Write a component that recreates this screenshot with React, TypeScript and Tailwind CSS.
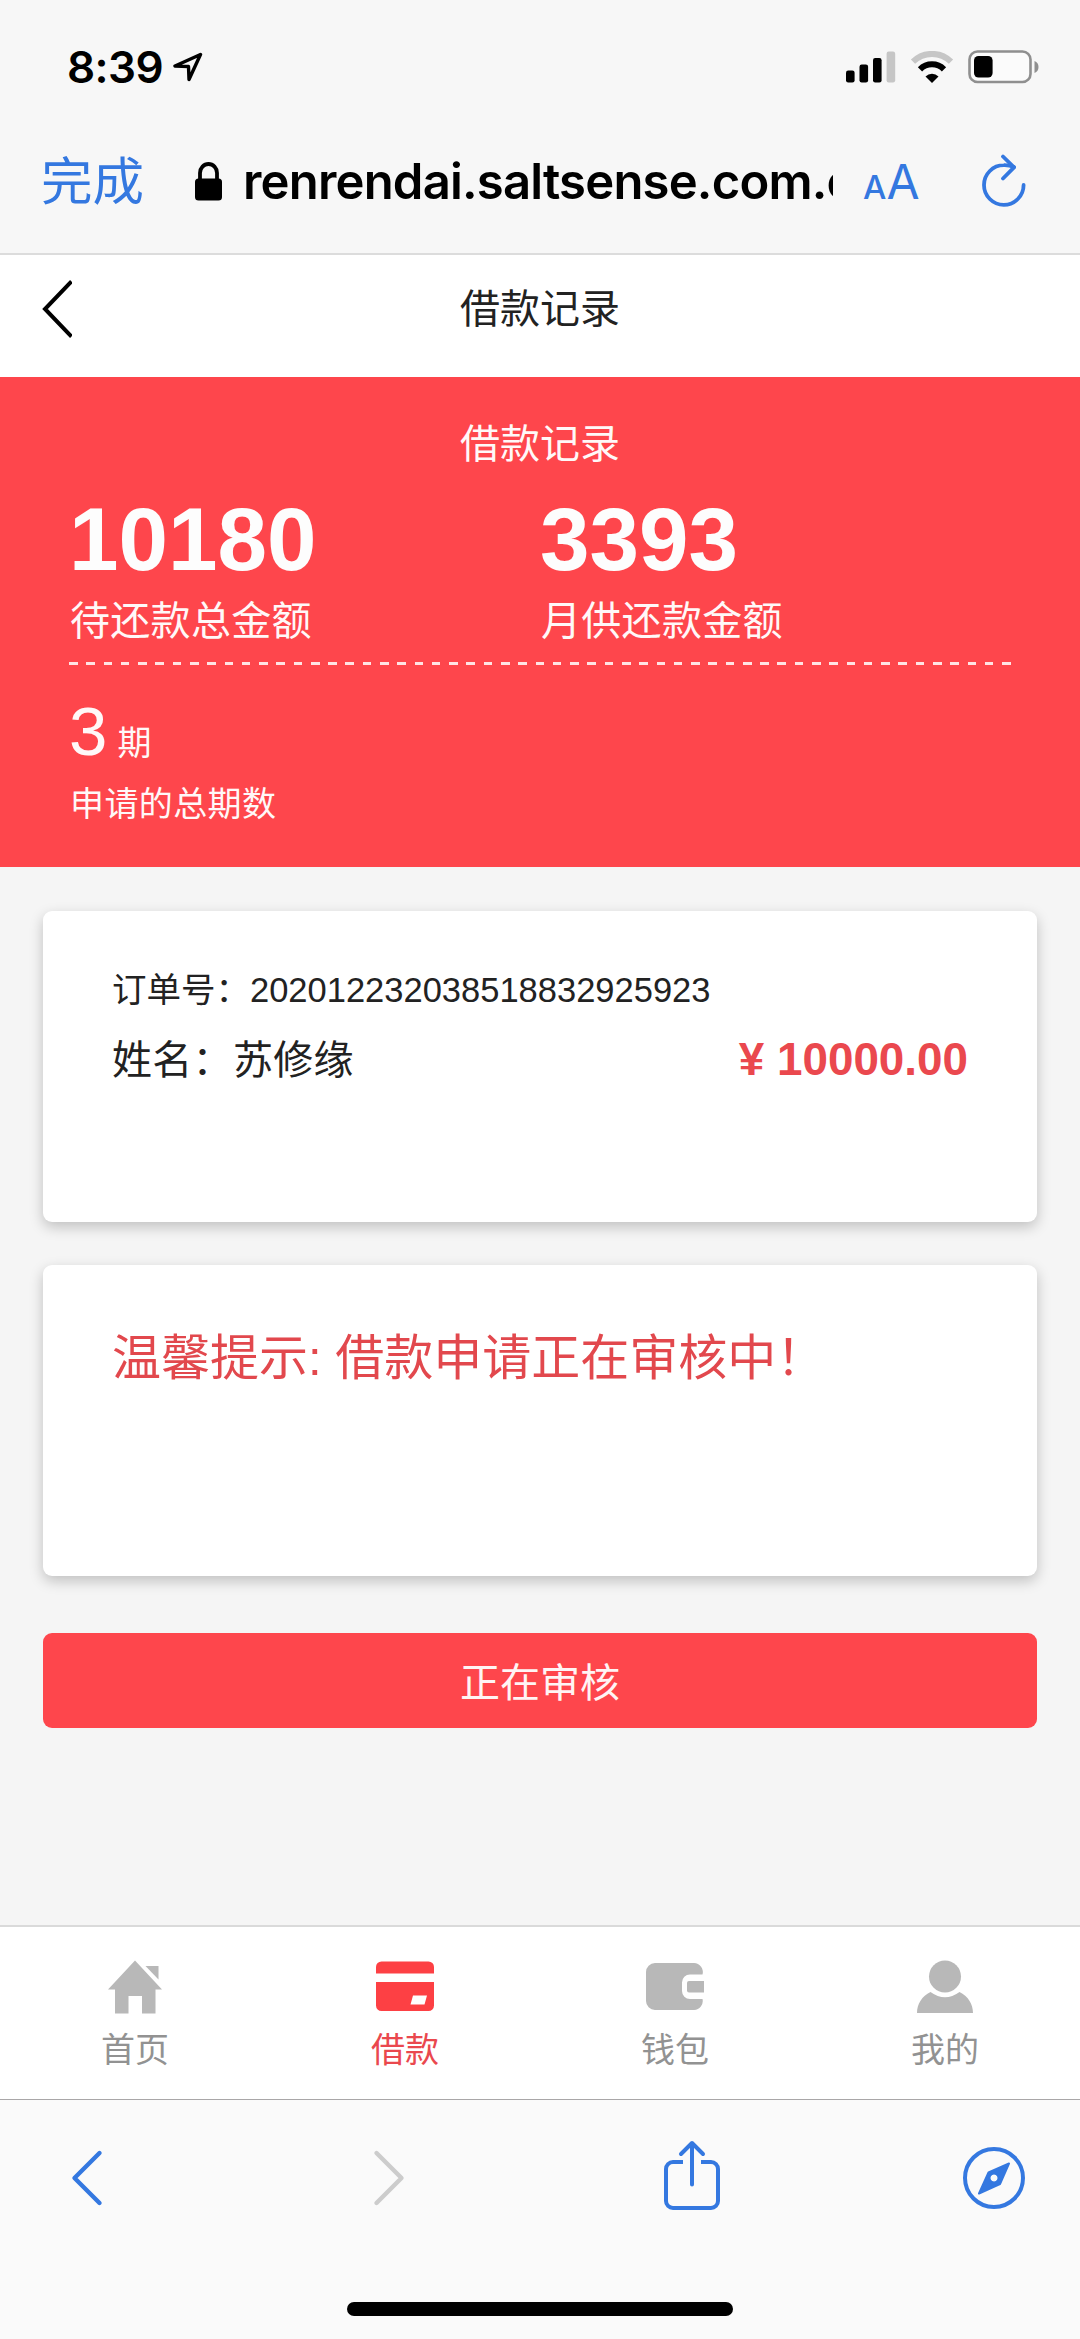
import React from 'react';

const stats = [
  { value: '10180', label: '待还款总金额' },
  { value: '3393', label: '月供还款金额' },
];

const tabs = [
  { name: '首页', icon: HomeIcon, active: false },
  { name: '借款', icon: CardIcon, active: true },
  { name: '钱包', icon: WalletIcon, active: false },
  { name: '我的', icon: UserIcon, active: false },
];

function HomeIcon() {
  return (
    <svg width="56" height="54" viewBox="0 0 56 54" fill="#b8b8b8">
      <path d="M28 0.5 L55 29.5 H48.5 V53.5 H35 V36 H21.5 V53.5 H8 V29.5 H1 Z" />
      <path d="M38.5 6 H51.5 V19.5 Z" />
    </svg>
  );
}

function CardIcon() {
  return (
    <svg width="58" height="54" viewBox="0 0 58 54" fill="#fd4044">
      <path d="M0 13.5 V7 a5.5 5.5 0 0 1 5.5 -5.5 h47 a5.5 5.5 0 0 1 5.5 5.5 V13.5 Z" />
      <path
        fillRule="evenodd"
        d="M0 22 H58 V45.5 a5.5 5.5 0 0 1 -5.5 5.5 h-47 A5.5 5.5 0 0 1 0 45.5 Z M37 35.5 L34.5 44.5 H48.5 L51 35.5 Z"
      />
    </svg>
  );
}

function WalletIcon() {
  return (
    <svg width="58" height="54" viewBox="0 0 58 54" fill="#b8b8b8">
      <path d="M9 3 H48 a9 9 0 0 1 8.5 11.5 H44 a8 8 0 0 0 -8 8 V31 a8 8 0 0 0 8 8 H56.5 a9 9 0 0 1 -8.5 11 H9 a9 9 0 0 1 -9 -9 V12 a9 9 0 0 1 9 -9 Z" />
      <path d="M43 21 H58 V32.5 H43 a2 2 0 0 1 -2 -2 V23 a2 2 0 0 1 2 -2 Z" />
    </svg>
  );
}

function UserIcon() {
  return (
    <svg width="58" height="54" viewBox="0 0 58 54" fill="#b8b8b8">
      <circle cx="29" cy="16.5" r="16" />
      <path d="M14.5 32 Q29 42.5 43.5 32 C52 36 57 44 57 53 H1 C1 44 6 36 14.5 32 Z" />
    </svg>
  );
}

function StatusBar() {
  return (
    <div className="flex h-[109px] items-center justify-between pt-6 pr-[41px] pl-[67px]">
      <div className="flex items-center gap-[10px]">
        <span className="text-[44px] leading-none font-semibold tracking-[-0.6px]">8:39</span>
        <svg width="30" height="30" viewBox="0 0 30 30" fill="none" stroke="#000" strokeWidth="3.4" strokeLinejoin="round">
          <path d="M27.5 2.5 L2 14 L15.5 14.5 L16 27.5 Z" />
        </svg>
      </div>
      <div className="flex items-center">
        <svg width="50" height="32" viewBox="0 0 50 32">
          <rect x="0" y="19.5" width="8.6" height="12" rx="2.2" />
          <rect x="13.5" y="13.5" width="8.6" height="18" rx="2.2" />
          <rect x="27" y="7" width="8.6" height="24.5" rx="2.2" />
          <rect x="40.6" y="0.5" width="8.6" height="31" rx="2.2" fill="#c6c6c6" />
        </svg>
        <svg className="ml-[14px]" width="44" height="32" viewBox="0 0 44 32" fill="none">
          <path d="M3 10.7 A27 27 0 0 1 41 10.7" stroke="#c6c6c6" strokeWidth="6" />
          <path d="M10 18.3 A17 17 0 0 1 34 18.3" stroke="#000" strokeWidth="6" />
          <path d="M22 32 L15.5 25.4 A9.3 9.3 0 0 1 28.5 25.4 Z" fill="#000" />
        </svg>
        <svg className="ml-[14px]" width="71" height="34" viewBox="0 0 71 34">
          <rect x="1.5" y="1.5" width="61" height="30.5" rx="8" fill="#fbfbfb" stroke="#8f8f8f" strokeWidth="2.6" />
          <rect x="6" y="6" width="18.6" height="21.5" rx="4.5" />
          <path d="M66.5 11 A6.5 6.5 0 0 1 66.5 23 Z" fill="#8f8f8f" />
        </svg>
      </div>
    </div>
  );
}

function AddressBar() {
  return (
    <div className="flex h-36 items-center pl-[41px]">
      <span className="w-[154px] pt-[2px] text-[51.5px] leading-none text-[#3478e0]">完成</span>
      <svg width="27" height="39" viewBox="0 0 27 39">
        <rect x="0" y="16.5" width="27" height="22" rx="3.5" />
        <path d="M5 18 V11 a8.5 9 0 0 1 17 0 V18" fill="none" stroke="#000" strokeWidth="3.8" />
      </svg>
      <div className="ml-[21px] w-[590px] overflow-hidden pt-[2px] text-[49px] leading-[72px] font-semibold tracking-[-0.8px] whitespace-nowrap">
        renrendai.saltsense.com.c
      </div>
      <div className="ml-[30px] flex items-baseline pt-[2px] text-[#3478e0]">
        <span className="text-[33px] leading-none font-medium">A</span>
        <span className="text-[48px] leading-none tracking-[-1px]">A</span>
      </div>
      <svg className="ml-[62px]" width="46" height="54" viewBox="0 0 46 54" fill="none" stroke="#3478e0" strokeWidth="3.8" strokeLinecap="round" strokeLinejoin="round">
        <path d="M42.6 31 A19.8 19.8 0 1 1 22.8 11.2 Q28 11 33 13" />
        <path d="M22 2.5 L33 13.3 L22 24.5" />
      </svg>
    </div>
  );
}

function PageHeader() {
  return (
    <div className="grid h-[122px] grid-cols-[1fr_auto_1fr] items-center bg-white pb-[15px] text-[#222]">
      <svg className="ml-[42px]" width="30" height="58" viewBox="0 0 30 58" fill="none" stroke="#000" strokeWidth="4">
        <path d="M29.5 1.5 L3 29 L29.5 56.5" />
      </svg>
      <h1 className="text-[40px] leading-none">借款记录</h1>
    </div>
  );
}

function Summary() {
  return (
    <section className="h-[490px] bg-[#fe464c] pt-[43px] text-[#fff8f8]">
      <h2 className="text-center text-[40px] leading-[48px]">借款记录</h2>
      <div className="mx-[69px] mt-[18px] grid grid-cols-2">
        {stats.map((s) => (
          <div key={s.label}>
            <div className="text-[89px] leading-[106px] font-bold text-[#fdfdfd]">{s.value}</div>
            <div className="mt-[5px] pl-px text-[40px] leading-[48px] tracking-[0.3px]">{s.label}</div>
          </div>
        ))}
      </div>
      <div className="mx-[69px] mt-[17px] h-[3px] bg-[repeating-linear-gradient(to_right,#ffe4e4_0_8.6px,transparent_8.6px_17.28px)]" />
      <div className="ml-[69px] mt-[27px] flex items-baseline leading-[80px]">
        <span className="text-[69px]">3</span>
        <span className="ml-[10px] text-[34px]">期</span>
      </div>
      <div className="ml-[70px] mt-[1px] text-[34px] leading-[40px] tracking-[0.4px]">申请的总期数</div>
    </section>
  );
}

function Panel({ children }: { children: React.ReactNode }) {
  return (
    <div className="h-[311px] rounded-[9px] bg-white px-[69px] shadow-[0_5px_14px_rgba(0,0,0,0.22)]">
      {children}
    </div>
  );
}

export default function App() {
  return (
    <div className="flex h-[2339px] w-[1080px] flex-col overflow-hidden bg-[#f5f5f5] font-['Liberation_Sans','Noto_Sans_CJK_SC',sans-serif]">
      {/* Browser chrome */}
      <header className="h-[255px] border-b-2 border-[#dcdcdc] bg-[#f7f7f7] font-['Inter','Noto_Sans_CJK_SC',sans-serif] text-black">
        <StatusBar />
        <AddressBar />
      </header>

      <PageHeader />
      <Summary />

      <main className="flex flex-1 flex-col px-[43px] pt-[44px]">
        <Panel>
          <p className="pt-[57px] text-[34.5px] leading-[44px] text-[#222]">订单号：202012232038518832925923</p>
          <div className="mt-[22px] flex items-center justify-between leading-[52px]">
            <span className="text-[40px] tracking-[0.3px] text-[#222]">姓名：苏修缘</span>
            <span className="text-[45.8px] font-bold text-[#ea484e]">¥ 10000.00</span>
          </div>
        </Panel>
        <div className="h-[43px]" />
        <Panel>
          <p className="pt-[63px] text-[49px] leading-[60px] text-[#e2484d]">温馨提示: 借款申请正在审核中！</p>
        </Panel>
        <button className="mt-[57px] h-[95px] rounded-[9px] bg-[#fe464c] pt-[4px] text-[40px] leading-none text-[#fff4f4]">
          正在审核
        </button>
      </main>

      <nav className="grid h-[174px] grid-cols-4 border-t-2 border-[#dadada] bg-white">
        {tabs.map(({ name, icon: Icon, active }) => (
          <div
            key={name}
            className={`flex flex-col items-center pt-[33px] text-[34px] leading-[40px] ${active ? 'text-[#ea484e]' : 'text-[#929292]'}`}
          >
            <Icon />
            <span className="mt-[16px]">{name}</span>
          </div>
        ))}
      </nav>

      {/* Browser toolbar */}
      <footer className="h-[240px] border-t border-[#a9a7a8] bg-[#fafafa]">
        <div className="flex items-center pt-[40px] pl-[71px] text-[#3478e0]">
          <svg width="32" height="58" viewBox="0 0 32 58" fill="none" stroke="currentColor" strokeWidth="4.4" strokeLinecap="round" strokeLinejoin="round">
            <path d="M28.5 4 L3.5 29 L28.5 54" />
          </svg>
          <svg className="ml-[270px]" width="32" height="58" viewBox="0 0 32 58" fill="none" stroke="#cccccc" strokeWidth="4.4" strokeLinecap="round" strokeLinejoin="round">
            <path d="M3.5 4 L28.5 29 L3.5 54" />
          </svg>
          <svg className="mb-[4px] ml-[259px]" width="56" height="72" viewBox="0 0 56 72" fill="none" stroke="currentColor" strokeWidth="4">
            <path d="M19 22 H9 a7 7 0 0 0 -7 7 V61 a7 7 0 0 0 7 7 H47 a7 7 0 0 0 7 -7 V29 a7 7 0 0 0 -7 -7 H37" />
            <path d="M28 3 V44.5 M17 14 L28 3 L39 14" strokeLinecap="round" strokeLinejoin="round" />
          </svg>
          <svg className="ml-[242px]" width="64" height="64" viewBox="0 0 64 64">
            <circle cx="32" cy="32" r="29" fill="none" stroke="currentColor" strokeWidth="4" />
            <path
              fill="currentColor"
              stroke="currentColor"
              strokeWidth="2"
              strokeLinejoin="round"
              fillRule="evenodd"
              d="M47 17.5 L38 38 L17 47.5 L26.5 26.5 Z M32 27.5 a4.5 4.5 0 1 0 0.01 0 Z"
            />
          </svg>
        </div>
        <div className="mx-auto mt-[86px] h-[14px] w-[386px] rounded-full bg-black" />
      </footer>
    </div>
  );
}
